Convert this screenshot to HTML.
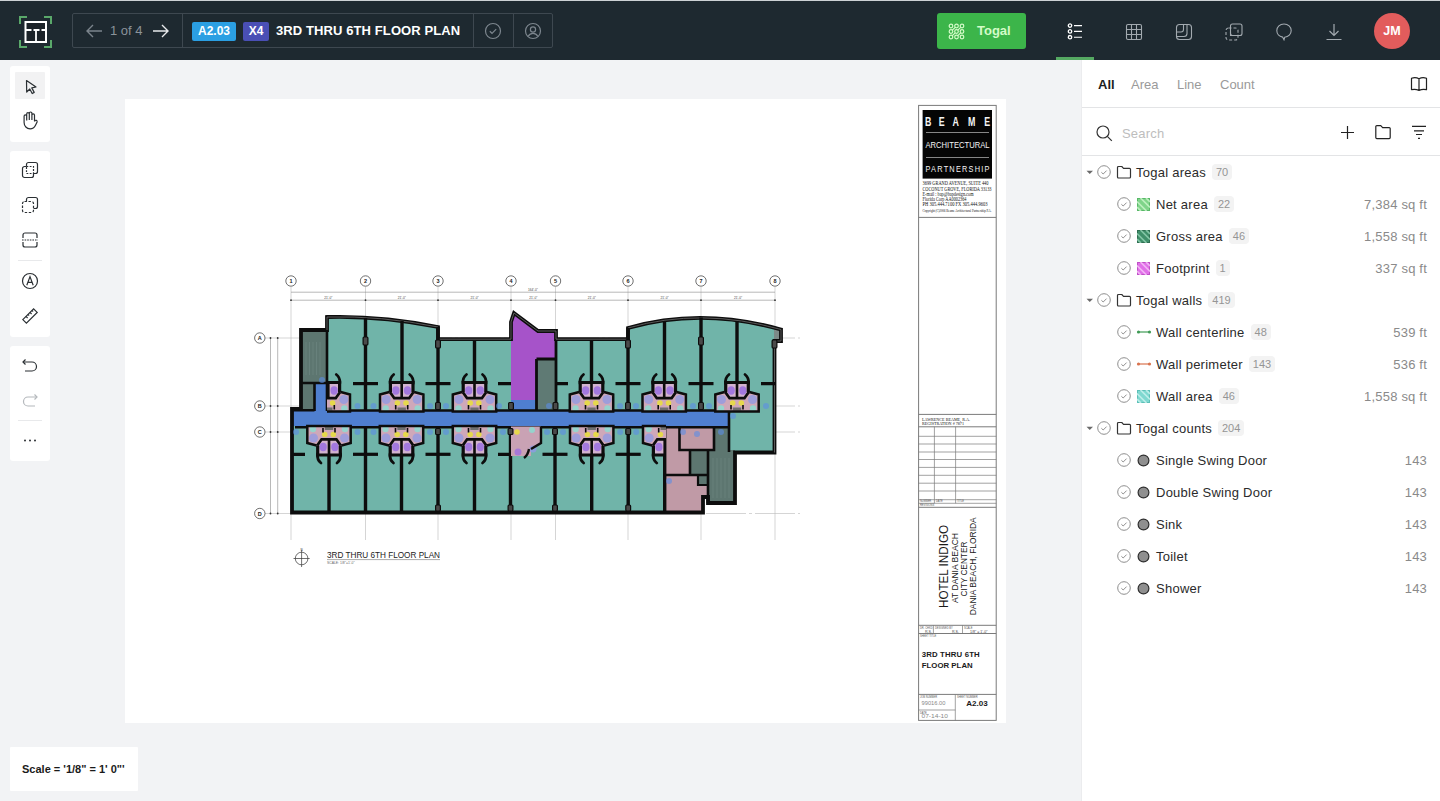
<!DOCTYPE html>
<html><head><meta charset="utf-8">
<style>
*{box-sizing:border-box;margin:0;padding:0}
html,body{width:1440px;height:801px;overflow:hidden;background:#f2f3f5;font-family:"Liberation Sans",sans-serif;position:relative}
.abs{position:absolute}
#topline{left:0;top:0;width:1440px;height:1px;background:#cdd1d4}
#hdr{left:0;top:1px;width:1440px;height:59px;background:#1e2930}
#crumb{left:72px;top:13px;width:481px;height:35px;border:1px solid #3e4850;border-radius:2px}
.vdiv{position:absolute;top:0;width:1px;height:33px;background:#3e4850}
.badge{position:absolute;top:8px;height:19px;border-radius:2px;color:#fff;font-weight:bold;font-size:12px;line-height:19px;text-align:center}
#ttl{position:absolute;left:203px;top:0;line-height:33px;color:#fff;font-weight:bold;font-size:13px;letter-spacing:0.1px}
#togal{left:937px;top:13px;width:89px;height:36px;background:#3cb54a;border-radius:3px}
#togal span{position:absolute;left:40px;top:0;line-height:36px;color:#d4fbc8;font-weight:bold;font-size:13px}
#uline{left:1056px;top:57px;width:38px;height:3px;background:#55a962}
#avatar{left:1374px;top:13px;width:36px;height:36px;border-radius:50%;background:#e25c5c;color:#fff;font-size:12.5px;font-weight:bold;text-align:center;line-height:36px}
.panel{position:absolute;left:10px;width:40px;background:#fff;border-radius:3px}
#paper{left:125px;top:99px;width:881px;height:624px;background:#fff}
#side{left:1081px;top:60px;width:359px;height:741px;background:#fff;border-left:1px solid #ebecee}
#scale{left:10px;top:747px;width:128px;height:44px;background:#fff;border-radius:1px;font-size:11px;font-weight:bold;color:#1a1a1a;line-height:44px;padding-left:12px}
.tab{position:absolute;top:0;line-height:49px;font-size:13px;color:#9a9a9a}
.sep{position:absolute;left:0;width:358px;height:1px;background:#e3e4e6}
.row{position:absolute;left:0;width:358px;height:32px}
.row .t{position:absolute;top:1px;line-height:32px;font-size:13px;color:#2b2b2b;letter-spacing:0.25px}
.row .c{display:inline-block;margin-left:6px;padding:0 4px;height:16px;line-height:16px;font-size:11px;color:#959595;background:#f3f3f3;border-radius:4px;vertical-align:1px;letter-spacing:0}
.row .v{position:absolute;right:13px;top:1px;line-height:32px;font-size:13px;color:#8a8a8a;letter-spacing:0.2px}
</style></head><body>
<div id="topline" class="abs"></div>
<div id="hdr" class="abs">
<svg class="abs" style="left:17px;top:13px" width="37" height="36" viewBox="0 0 37 36">
<g fill="none" stroke="#5aa86a" stroke-width="2">
<path d="M3 10V3h7"/><path d="M27 3h7v7"/><path d="M3 26v7h7"/><path d="M27 33h7v-7"/>
</g>
<rect x="8.5" y="8" width="20.5" height="20" fill="#1b2228" stroke="#fff" stroke-width="2"/>
<path d="M9 16h5.5M16.5 16h6M24.5 16h4M19 16V28" stroke="#fff" stroke-width="1.8" fill="none"/>
</svg>
<div id="crumb" class="abs" style="top:12px">
 <svg class="abs" style="left:12px;top:9px" width="18" height="16" viewBox="0 0 18 16"><path d="M17 8H2M8 2L2 8l6 6" fill="none" stroke="#7b848c" stroke-width="1.4"/></svg>
 <div class="abs" style="left:37px;top:0;line-height:33px;font-size:13px;color:#8b939a">1 of 4</div>
 <svg class="abs" style="left:79px;top:9px" width="18" height="16" viewBox="0 0 18 16"><path d="M1 8h15M10 2l6 6-6 6" fill="none" stroke="#e8eaec" stroke-width="1.4"/></svg>
 <div class="vdiv" style="left:109px"></div>
 <div class="badge" style="left:119px;width:44px;background:#2b9fe3">A2.03</div>
 <div class="badge" style="left:170px;width:26px;background:#4a4fb5">X4</div>
 <div id="ttl">3RD THRU 6TH FLOOR PLAN</div>
 <div class="vdiv" style="left:400px"></div>
 <svg class="abs" style="left:411px;top:8px" width="18" height="18" viewBox="0 0 18 18"><circle cx="9" cy="9" r="7.5" fill="none" stroke="#7d868e" stroke-width="1.2"/><path d="M5.8 9.3l2.2 2 4.2-4.2" fill="none" stroke="#7d868e" stroke-width="1.2"/></svg>
 <div class="vdiv" style="left:440px"></div>
 <svg class="abs" style="left:451px;top:8px" width="18" height="18" viewBox="0 0 18 18"><circle cx="9" cy="9" r="7.5" fill="none" stroke="#7d868e" stroke-width="1.2"/><circle cx="9" cy="7.5" r="2.6" fill="none" stroke="#7d868e" stroke-width="1.2"/><path d="M4.2 14.2c1.2-2 2.8-2.8 4.8-2.8s3.6.8 4.8 2.8" fill="none" stroke="#7d868e" stroke-width="1.2"/></svg>
</div>
<div id="togal" class="abs" style="top:12px">
 <svg class="abs" style="left:11px;top:10px" width="17" height="17" viewBox="0 0 17 17"><g fill="none" stroke="#d4fbc8" stroke-width="1.2">
 <circle cx="3" cy="3" r="1.8"/><circle cx="8.5" cy="3" r="1.8"/><circle cx="14" cy="3" r="1.8"/>
 <circle cx="3" cy="8.5" r="1.8"/><circle cx="8.5" cy="8.5" r="1.8"/><circle cx="14" cy="8.5" r="1.8"/>
 <circle cx="3" cy="14" r="1.8"/><circle cx="8.5" cy="14" r="1.8"/><circle cx="14" cy="14" r="1.8"/>
 <path d="M4.3 7.2l2.9-2.9M4.3 12.7l2.9-2.9M9.8 7.2l2.9-2.9M9.8 12.7l2.9-2.9"/></g></svg>
 <span>Togal</span>
</div>
<svg class="abs" style="left:1067px;top:21px" width="18" height="18" viewBox="0 0 18 18"><g fill="none" stroke="#fff" stroke-width="1.3"><circle cx="3" cy="3.6" r="1.7"/><circle cx="3" cy="9.4" r="1.7"/><circle cx="3" cy="15.2" r="1.7"/><path d="M7 3.6h8M7 9.4h8M7 15.2h8" stroke-width="1.1"/></g></svg>
<div id="uline" class="abs" style="top:56px"></div>
<svg class="abs" style="left:1125px;top:22px" width="18" height="18" viewBox="0 0 18 18"><g fill="none" stroke="#a3aab0" stroke-width="1.1"><rect x="1.5" y="1.5" width="15" height="15" rx="1.5"/><path d="M6.5 1.5v15M11.5 1.5v15M1.5 6.5h15M1.5 11.5h15"/></g></svg>
<svg class="abs" style="left:1175px;top:22px" width="18" height="18" viewBox="0 0 18 18"><g fill="none" stroke="#a3aab0" stroke-width="1.1"><rect x="1.5" y="1.5" width="15" height="15" rx="3"/><path d="M12 1.5v9a3 3 0 0 1-3 3H1.5"/><path d="M8.5 1.5v5a2.5 2.5 0 0 1-2.5 2.5H1.5"/></g></svg>
<svg class="abs" style="left:1225px;top:22px" width="18" height="18" viewBox="0 0 18 18"><g fill="none" stroke="#a3aab0" stroke-width="1.1"><rect x="5.5" y="1" width="11.5" height="11.5" rx="2"/><rect x="1" y="5" width="12" height="12" rx="2.5" stroke-dasharray="3 2"/><path d="M5.5 8.5V12.5h4"/></g></svg>
<svg class="abs" style="left:1275px;top:22px" width="18" height="18" viewBox="0 0 18 18"><path d="M9 1c4.1 0 7.2 2.9 7.2 6.6 0 3.5-2.8 6.3-6.5 6.6L9 16.8l-1.4-2.7C4.2 13.6 1.8 10.9 1.8 7.6 1.8 3.9 4.9 1 9 1z" fill="none" stroke="#a3aab0" stroke-width="1.1"/></svg>
<svg class="abs" style="left:1325px;top:22px" width="18" height="18" viewBox="0 0 18 18"><g fill="none" stroke="#a3aab0" stroke-width="1.2"><path d="M9 1v11.5M4.5 8l4.5 4.5L13.5 8M1.5 16.5h15"/></g></svg>
<div id="avatar" class="abs" style="top:12px">JM</div>
</div>
<div id="paper" class="abs"></div>
<svg class="abs" style="left:0;top:0" width="1440" height="801" viewBox="0 0 1440 801">
<!--PLAN-->
<g stroke="#b9b9b9" stroke-width="0.6" fill="none">
<path d="M291 287V540"/>
<path d="M365.5 287V540"/>
<path d="M438 287V540"/>
<path d="M511 287V540"/>
<path d="M555.5 287V540"/>
<path d="M628 287V540"/>
<path d="M701 287V540"/>
<path d="M775 287V540"/>
<path d="M265 338H800" stroke-dasharray="40 3 3 3"/>
<path d="M265 406H800" stroke-dasharray="40 3 3 3"/>
<path d="M265 432H800" stroke-dasharray="40 3 3 3"/>
<path d="M265 513.5H800" stroke-dasharray="40 3 3 3"/>
</g>
<g stroke="#8a8a8a" stroke-width="0.6" fill="none">
<path d="M291 292.2H775M291 300.2H775M270.5 338V514M277.7 338V514"/>
</g>
<g fill="#333">
<circle cx="291" cy="300.2" r="0.9"/>
<circle cx="365.5" cy="300.2" r="0.9"/>
<circle cx="438" cy="300.2" r="0.9"/>
<circle cx="511" cy="300.2" r="0.9"/>
<circle cx="555.5" cy="300.2" r="0.9"/>
<circle cx="628" cy="300.2" r="0.9"/>
<circle cx="701" cy="300.2" r="0.9"/>
<circle cx="775" cy="300.2" r="0.9"/>
<circle cx="277.7" cy="338" r="0.9"/><circle cx="270.5" cy="338" r="0.9"/>
<circle cx="277.7" cy="406" r="0.9"/><circle cx="270.5" cy="406" r="0.9"/>
<circle cx="277.7" cy="432" r="0.9"/><circle cx="270.5" cy="432" r="0.9"/>
<circle cx="277.7" cy="513.5" r="0.9"/><circle cx="270.5" cy="513.5" r="0.9"/>
</g>
<g font-family="Liberation Sans" font-size="5.5" font-weight="bold" text-anchor="middle" fill="#222">
<circle cx="291" cy="281" r="5.2" fill="#fff" stroke="#333" stroke-width="0.7"/><text x="291" y="283">1</text>
<circle cx="365.5" cy="281" r="5.2" fill="#fff" stroke="#333" stroke-width="0.7"/><text x="365.5" y="283">2</text>
<circle cx="438" cy="281" r="5.2" fill="#fff" stroke="#333" stroke-width="0.7"/><text x="438" y="283">3</text>
<circle cx="511" cy="281" r="5.2" fill="#fff" stroke="#333" stroke-width="0.7"/><text x="511" y="283">4</text>
<circle cx="555.5" cy="281" r="5.2" fill="#fff" stroke="#333" stroke-width="0.7"/><text x="555.5" y="283">5</text>
<circle cx="628" cy="281" r="5.2" fill="#fff" stroke="#333" stroke-width="0.7"/><text x="628" y="283">6</text>
<circle cx="701" cy="281" r="5.2" fill="#fff" stroke="#333" stroke-width="0.7"/><text x="701" y="283">7</text>
<circle cx="775" cy="281" r="5.2" fill="#fff" stroke="#333" stroke-width="0.7"/><text x="775" y="283">8</text>
<circle cx="259.8" cy="338" r="5.2" fill="#fff" stroke="#333" stroke-width="0.7"/><text x="259.8" y="340">A</text>
<circle cx="259.8" cy="406" r="5.2" fill="#fff" stroke="#333" stroke-width="0.7"/><text x="259.8" y="408">B</text>
<circle cx="259.8" cy="432" r="5.2" fill="#fff" stroke="#333" stroke-width="0.7"/><text x="259.8" y="434">C</text>
<circle cx="259.8" cy="513.5" r="5.2" fill="#fff" stroke="#333" stroke-width="0.7"/><text x="259.8" y="515.5">D</text>
</g>
<g font-family="Liberation Sans" font-size="3.2" fill="#444" text-anchor="middle">
<text x="328.25" y="298.8">21&#39;-0&quot;</text>
<text x="401.75" y="298.8">21&#39;-0&quot;</text>
<text x="474.5" y="298.8">21&#39;-0&quot;</text>
<text x="533.25" y="298.8">21&#39;-0&quot;</text>
<text x="591.75" y="298.8">21&#39;-0&quot;</text>
<text x="664.5" y="298.8">21&#39;-0&quot;</text>
<text x="738.0" y="298.8">21&#39;-0&quot;</text>
<text x="533" y="290.8">164&#39;-0&quot;</text>
</g>
<path d="M327 317Q381 315.5 438 327V339H511V412H327Z" fill="#70b4a9"/>
<path d="M555.5 339H628V328Q701 307 775 328V453H729V412H555.5Z" fill="#70b4a9"/>
<rect x="511" y="340" width="45" height="72" fill="#70b4a9"/>
<rect x="291" y="426" width="374" height="87" fill="#70b4a9"/>
<path d="M301 330H327V383H314V409H301Z" fill="#5d7670"/>
<path d="M293 409.5H314V383H327V411H729V426H293Z" fill="#4f7fd0"/>
<rect x="511" y="398" width="26" height="14" fill="#4f7fd0"/>
<path d="M511 322L514 313L538 331H556V359H536.5V400H511Z" fill="#a653c9"/>
<rect x="536.5" y="359" width="19" height="50" fill="#5f7a74"/>
<path d="M665 426H729V450H708V497H703V512H665Z" fill="#c09aa6"/>
<path d="M714 426H729V450H735V503H708V485H698V475H690V450H714Z" fill="#5d7670"/>
<g stroke="#7b948e" stroke-width="0.6" opacity="0.7">
<path d="M306 342V375"/>
<path d="M309.5 342V375"/>
<path d="M313 342V375"/>
<path d="M316.5 342V375"/>
<path d="M320 342V375"/>
<path d="M713 458V498"/>
<path d="M717 458V498"/>
<path d="M721 458V498"/>
<path d="M725 458V498"/>
<path d="M729 458V498"/>
</g>
<rect x="774" y="329" width="7" height="12" fill="#7d8a88"/>
<g fill="none" stroke="#0d0d0d" stroke-linejoin="miter">
<path stroke-width="3.8" d="M292 512.5V409H301V330H327V317Q381 315.5 438 327V339.2H511V322L514 313L538 331H556V339.2H628V328Q701 307 781 329.5V341H774.5V452.5H735V503H708V497H703V512.5Z"/>
<path stroke-width="0.8" stroke="#6d6d6d" d="M327 330V317Q381 315.5 438 327V339.2H511V322L514 313L538 331H556V339.2H628V328Q701 307 781 329.5V341H774.5V452.5"/>
<path stroke-width="2.6" d="M327 410.5H729M295 427.2H729M314.5 383V411M327 330V411M301 383H327M729 410V452M292 410.2H314.5"/>
<path stroke-width="3.4" d="M365.5 318V410"/>
<path stroke-width="3.4" d="M402 321V410"/>
<path stroke-width="3.4" d="M438 327V410"/>
<path stroke-width="3.4" d="M474.5 340V410"/>
<path stroke-width="3.4" d="M591.5 340V410"/>
<path stroke-width="3.4" d="M628 328V410"/>
<path stroke-width="3.4" d="M664.5 321V410"/>
<path stroke-width="3.4" d="M701 317.5V410"/>
<path stroke-width="3.4" d="M737 321V410"/>
<path stroke-width="2.8" d="M536.5 359V410M536.5 359H556M556 340V410"/>
<path stroke-width="3.2" d="M353.0 383.6H378.0"/>
<path stroke-width="3.2" d="M425.5 383.6H450.5"/>
<path stroke-width="3.2" d="M615.5 383.6H640.5"/>
<path stroke-width="3.2" d="M688.5 383.6H713.5"/>
<path stroke-width="3.2" d="M498 383.6H511M556 383.6H568M761 383.6H775"/>
<path stroke-width="3.4" d="M329 427V512"/>
<path stroke-width="3.4" d="M365.5 427V512"/>
<path stroke-width="3.4" d="M401.5 427V512"/>
<path stroke-width="3.4" d="M438 427V512"/>
<path stroke-width="3.4" d="M474.5 427V512"/>
<path stroke-width="3.4" d="M510.5 427V512"/>
<path stroke-width="3.4" d="M555 427V512"/>
<path stroke-width="3.4" d="M591.7 427V512"/>
<path stroke-width="3.4" d="M628.2 427V512"/>
<path stroke-width="3.4" d="M664.7 427V512"/>
<path stroke-width="3.2" d="M353.0 454.3H378.0"/>
<path stroke-width="3.2" d="M425.5 454.3H450.5"/>
<path stroke-width="3.2" d="M542.5 454.3H567.5"/>
<path stroke-width="3.2" d="M615.7 454.3H640.7"/>
<path stroke-width="3.2" d="M293 454.3H305M498 454.3H510.5"/>
<path stroke-width="2.6" d="M679.5 427V450H714V427M690 450V475H665M708 450V503M690 475H708"/>
<path stroke-width="2.2" d="M698 475V485H708"/>
</g>
<defs>
<clipPath id="cR"><rect x="-1.3" y="-45" width="30" height="50"/></clipPath>
<clipPath id="cL"><rect x="-28.7" y="-45" width="30" height="50"/></clipPath>
<g id="pod">
<path d="M-21.7 0V-17L-12.4 -19.5V-30H12.4V-19.5L21.7 -17V0Z" fill="#cfa8b9"/>
<circle cx="-15.5" cy="-12" r="4.5" fill="#8e9ae6" opacity="0.75"/><circle cx="15.5" cy="-12" r="4.5" fill="#8e9ae6" opacity="0.75"/>
<circle cx="-16" cy="-3" r="3.2" fill="#90d8cf" opacity="0.9"/><circle cx="16" cy="-3" r="3.2" fill="#90d8cf" opacity="0.9"/>
<path d="M-10.8 -28H-1.3V-14.5H-7.2L-10.8 -19.5Z M10.8 -28H1.3V-14.5H7.2L10.8 -19.5Z" fill="#d2b3cf"/>
<ellipse cx="-5.8" cy="-21" rx="3.6" ry="4.2" fill="#9a6de0" opacity="0.85"/><ellipse cx="5.8" cy="-21" rx="3.6" ry="4.2" fill="#9a6de0" opacity="0.85"/>
<circle cx="-4.3" cy="-8.5" r="2.8" fill="#e6d84c"/><circle cx="4.3" cy="-8.5" r="2.8" fill="#e6d84c"/>
<rect x="-4.2" y="-4" width="8.4" height="3" fill="#6f6f6f"/>
<g fill="none" stroke="#0d0d0d" stroke-width="2.5">
<path d="M-12.4 -19.5L-21.7 -17V0H21.7V-17L12.4 -19.5"/>
<path d="M-11.3 -19.5V-29H11.3V-19.5" stroke-width="3.2"/>
<path d="M-11.8 -19.5L-7.4 -13.3H7.4L11.8 -19.5" stroke-width="2.8"/><path d="M0 -30V-13" stroke-width="2.6"/>
<path d="M-11.5 -28Q-12 -34 -8 -37M11.5 -28Q12 -34 8 -37" stroke-width="2.8" stroke-linecap="round"/>
<path d="M-6 -6.5V-2M6 -6.5V-2" stroke-width="1.6"/>
</g></g>
</defs>
<use href="#pod" transform="translate(401.7 411.5)"/>
<use href="#pod" transform="translate(474.5 411.5)"/>
<use href="#pod" transform="translate(591.5 411.5)"/>
<use href="#pod" transform="translate(664.2 411.5)"/>
<use href="#pod" transform="translate(737 411.5)"/>
<g clip-path="url(#cR)" transform="translate(328.3 411.5)"><use href="#pod"/></g>
<use href="#pod" transform="translate(329 426) scale(1 -1)"/>
<use href="#pod" transform="translate(401.5 426) scale(1 -1)"/>
<use href="#pod" transform="translate(474.5 426) scale(1 -1)"/>
<use href="#pod" transform="translate(591.7 426) scale(1 -1)"/>
<g transform="translate(664.7 426) scale(1 -1)"><g clip-path="url(#cL)"><use href="#pod"/></g></g>
<path d="M511 426.5H541V443L531 449V456H511Z" fill="#c9a2b4"/>
<circle cx="517" cy="432" r="2.8" fill="#e6d84c"/><circle cx="532" cy="430" r="3" fill="#90d8cf" opacity="0.9"/><circle cx="518" cy="452" r="3.5" fill="#a678d8"/><circle cx="533" cy="449" r="3.5" fill="#8e9ae6" opacity="0.8"/>
<path d="M541 426.5V443L531 449M529 449Q528 455 524 458" fill="none" stroke="#0d0d0d" stroke-width="2.4"/>
<g fill="#5b8de6" opacity="0.6">
<circle cx="357.5" cy="406" r="3"/><circle cx="373.5" cy="406" r="3"/>
<circle cx="430" cy="406" r="3"/><circle cx="446" cy="406" r="3"/>
<circle cx="620" cy="406" r="3"/><circle cx="636" cy="406" r="3"/>
<circle cx="693" cy="406" r="3"/><circle cx="709" cy="406" r="3"/>
<circle cx="357.5" cy="432" r="3"/><circle cx="373.5" cy="432" r="3"/>
<circle cx="430" cy="432" r="3"/><circle cx="446" cy="432" r="3"/>
<circle cx="547" cy="432" r="3"/><circle cx="563" cy="432" r="3"/>
<circle cx="620.2" cy="432" r="3"/><circle cx="636.2" cy="432" r="3"/>
<circle cx="322" cy="380" r="3"/><circle cx="549" cy="406" r="3"/><circle cx="296" cy="432" r="3"/><circle cx="503" cy="432" r="3"/><circle cx="683" cy="432" r="3"/><circle cx="697" cy="434" r="3"/><circle cx="669" cy="481" r="3"/><circle cx="733" cy="416" r="3"/><circle cx="499" cy="406" r="3"/><circle cx="766" cy="406" r="3"/><circle cx="721" cy="432" r="3"/>
</g>
<g fill="#4a4a4a" stroke="#0d0d0d" stroke-width="1.2">
<rect x="363.1" y="337" width="4.8" height="8" rx="1"/>
<rect x="698.6" y="337" width="4.8" height="8" rx="1"/>
<rect x="435.6" y="340" width="4.8" height="8" rx="1"/>
<rect x="625.6" y="340" width="4.8" height="8" rx="1"/>
<rect x="772.1" y="340" width="4.8" height="8" rx="1"/>
<rect x="435.6" y="402.5" width="4.8" height="7" rx="1"/>
<rect x="508.6" y="402.5" width="4.8" height="7" rx="1"/>
<rect x="553.1" y="402.5" width="4.8" height="7" rx="1"/>
<rect x="625.6" y="402.5" width="4.8" height="7" rx="1"/>
<rect x="698.6" y="402.5" width="4.8" height="7" rx="1"/>
<rect x="435.6" y="428.5" width="4.8" height="6" rx="1"/><rect x="435.6" y="505" width="4.8" height="6" rx="1"/>
<rect x="508.1" y="428.5" width="4.8" height="6" rx="1"/><rect x="508.1" y="505" width="4.8" height="6" rx="1"/>
<rect x="552.6" y="428.5" width="4.8" height="6" rx="1"/><rect x="552.6" y="505" width="4.8" height="6" rx="1"/>
<rect x="625.8000000000001" y="428.5" width="4.8" height="6" rx="1"/><rect x="625.8000000000001" y="505" width="4.8" height="6" rx="1"/>
</g>
<g fill="none" stroke="#333" stroke-width="0.7"><circle cx="301.6" cy="558.5" r="6.3"/><path d="M301.6 550V567M293.5 558.5H309.7"/></g>
<text x="301.6" y="551" font-family="Liberation Sans" font-size="3" text-anchor="middle" fill="#333">N</text>
<text x="327" y="558" font-family="Liberation Sans" font-size="8.2" fill="#222" textLength="113" lengthAdjust="spacingAndGlyphs">3RD THRU 6TH FLOOR PLAN</text>
<path d="M327 559.6H440" stroke="#555" stroke-width="0.5"/>
<text x="327" y="563.8" font-family="Liberation Sans" font-size="3.4" fill="#666">SCALE: 1/8"=1'-0"</text>
<g fill="none" stroke="#7a7a7a" stroke-width="1">
<rect x="918.6" y="105.4" width="77.6" height="615"/>
<path d="M918.6 217.4H996.2"/>
<path d="M918.6 414.4H996.2"/>
<path d="M918.6 426.8H996.2"/>
<path d="M918.6 507.3H996.2"/>
<path d="M918.6 625.3H996.2"/>
<path d="M918.6 633.5H996.2"/>
<path d="M918.6 694.4H996.2"/>
<path d="M918.6 436.3H996.2" stroke-width="0.7"/>
<path d="M918.6 444H996.2" stroke-width="0.7"/>
<path d="M918.6 452H996.2" stroke-width="0.7"/>
<path d="M918.6 459.5H996.2" stroke-width="0.7"/>
<path d="M918.6 467.4H996.2" stroke-width="0.7"/>
<path d="M918.6 475.3H996.2" stroke-width="0.7"/>
<path d="M918.6 483.2H996.2" stroke-width="0.7"/>
<path d="M918.6 491H996.2" stroke-width="0.7"/>
<path d="M918.6 499.7H996.2" stroke-width="0.7"/>
<path d="M918.6 503.3H996.2" stroke-width="0.7"/>
<path d="M934.4 426.8V503.3M955.6 426.8V503.3" stroke-width="0.7"/>
<path d="M933.4 625.3V633.5M962.5 625.3V633.5" stroke-width="0.7"/>
<path d="M955.3 694.4V720.4M918.6 710H955.3" stroke-width="0.7"/>
</g>
<rect x="922.6" y="110" width="69.4" height="68.6" fill="#050505"/>
<path d="M926 132.5H989M926 157.5H989" stroke="#ddd" stroke-width="0.6"/>
<g font-family="Liberation Sans" font-weight="bold" fill="#f4f4f4">
<text font-size="13.4" text-anchor="middle" transform="translate(928.3 125.6) scale(0.66 1)">B</text>
<text font-size="13.4" text-anchor="middle" transform="translate(941.8 125.6) scale(0.66 1)">E</text>
<text font-size="13.4" text-anchor="middle" transform="translate(955.8 125.6) scale(0.66 1)">A</text>
<text font-size="13.4" text-anchor="middle" transform="translate(971.8 125.6) scale(0.66 1)">M</text>
<text font-size="13.4" text-anchor="middle" transform="translate(987.3 125.6) scale(0.66 1)">E</text>
<text font-size="9.8" font-weight="normal" transform="translate(925.5 148.2) scale(0.75 1)" textLength="85.3" lengthAdjust="spacingAndGlyphs">ARCHITECTURAL</text>
<text font-size="9.8" font-weight="normal" transform="translate(925.5 172.2) scale(0.75 1)" textLength="85.3" lengthAdjust="spacing">PARTNERSHIP</text>
</g>
<g font-family="Liberation Serif" font-size="5.6" fill="#111">
<text x="922.5" y="185.4" textLength="66" lengthAdjust="spacingAndGlyphs">3699 GRAND AVENUE, SUITE 440</text>
<text x="922.5" y="190.6" textLength="69" lengthAdjust="spacingAndGlyphs">COCONUT GROVE, FLORIDA 33133</text>
<text x="922.5" y="196" textLength="51" lengthAdjust="spacingAndGlyphs">E-mail : bap@bapdesign.com</text>
<text x="922.5" y="201.2" textLength="44" lengthAdjust="spacingAndGlyphs">Florida Corp AA0002364</text>
<text x="922.5" y="206.4" textLength="65" lengthAdjust="spacingAndGlyphs">PH 305.444.7100   FX 305.444.9603</text>
<text x="922.5" y="212.2" font-size="3" textLength="69" lengthAdjust="spacingAndGlyphs">Copyright (C)2006 Beame Architectural Partnership P.A.</text>
<text x="922" y="420.6" font-size="4.6" textLength="48" lengthAdjust="spacingAndGlyphs">LAWRENCE BEAME, R.A.</text>
<text x="922" y="424.6" font-size="4.6" textLength="42" lengthAdjust="spacingAndGlyphs">REGISTRATION # 7871</text>
</g>
<g font-family="Liberation Sans" font-size="2.6" fill="#555">
<text x="920" y="502">NUMBER</text><text x="936" y="502">DATE</text><text x="957" y="502">TITLE</text><text x="920" y="506.3">REVISIONS</text>
<text x="920" y="628.5">DR. CHKD</text><text x="935" y="628.5">DESIGNED BY</text><text x="964" y="628.5">SCALE</text>
<text x="920" y="637">SHEET TITLE</text><text x="920" y="698">JOB NUMBER</text><text x="957" y="698">SHEET NUMBER</text><text x="920" y="713.5">DATE</text>
</g>
<g font-family="Liberation Sans" font-size="3.6" fill="#444">
<text x="925" y="632.5">R.S.</text><text x="952" y="632.5">R.S.</text><text x="970" y="632.5">1/8" = 1'-0"</text>
</g>
<g font-family="Liberation Sans" fill="#1a1a1a" transform="translate(0 0)">
<text transform="translate(948.2 608) rotate(-90)" font-size="13.2" textLength="83" lengthAdjust="spacingAndGlyphs">HOTEL INDIGO</text>
<text transform="translate(958 603) rotate(-90)" font-size="9.2" textLength="70" lengthAdjust="spacingAndGlyphs">AT DANIA BEACH</text>
<text transform="translate(966.8 596.6) rotate(-90)" font-size="9.2" textLength="55" lengthAdjust="spacingAndGlyphs">CITY CENTER</text>
<text transform="translate(975.8 615.3) rotate(-90)" font-size="9.2" textLength="98" lengthAdjust="spacingAndGlyphs">DANIA BEACH, FLORIDA</text>
</g>
<g font-family="Liberation Sans" font-weight="bold" fill="#1a1a1a">
<text x="921.7" y="657" font-size="7.8" textLength="58" lengthAdjust="spacing">3RD THRU 6TH</text>
<text x="921.7" y="667.6" font-size="7.8" textLength="51" lengthAdjust="spacing">FLOOR PLAN</text>
<text x="966.3" y="706.2" font-size="8" textLength="21.5" lengthAdjust="spacingAndGlyphs">A2.03</text>
</g>
<g font-family="Liberation Sans" fill="#888">
<text x="921.5" y="705.3" font-size="5.5" textLength="24" lengthAdjust="spacingAndGlyphs">99016.00</text>
<text x="921.5" y="718" font-size="5.5" textLength="26.5" lengthAdjust="spacingAndGlyphs">07-14-10</text>
</g>
<!--/PLAN-->
</svg>
<div class="panel" style="top:66px;height:76px">
 <div class="abs" style="left:5px;top:6px;width:30px;height:27px;background:#f2f2f3;border-radius:1px"></div>
 <svg class="abs" style="left:13.5px;top:12.5px" width="16" height="18" viewBox="0 0 16 18"><path d="M2.5 1.5l9.5 6.5-4.2.9 2.4 4.5-2 1.1-2.4-4.5-3.1 3z" fill="none" stroke="#2a2f33" stroke-width="1.2" stroke-linejoin="round"/></svg>
 <svg class="abs" style="left:11px;top:45px" width="18" height="19" viewBox="0 0 18 19"><path transform="translate(18 0) scale(-1 1)" d="M4.5 10V4.2a1.3 1.3 0 0 1 2.6 0V9M7.1 9V2.3a1.3 1.3 0 0 1 2.6 0V9M9.7 9V3a1.3 1.3 0 0 1 2.6 0V9.5M12.3 9.5V5.2a1.3 1.3 0 0 1 2.6 0v6.3c0 3.7-2.6 6.3-6 6.3-2.6 0-4.2-1.2-5.4-3.6L1.9 10.9a1.3 1.3 0 0 1 2.3-1.1L4.5 10.5" fill="none" stroke="#2a2f33" stroke-width="1.2" stroke-linejoin="round"/></svg>
</div>
<div class="panel" style="top:151px;height:186px">
 <svg class="abs" style="left:11px;top:10px" width="18" height="18" viewBox="0 0 18 18"><g fill="none" stroke="#2a2f33" stroke-width="1.2"><path d="M5.5 5.5V3.5a2 2 0 0 1 2-2h7a2 2 0 0 1 2 2v7a2 2 0 0 1-2 2h-2"/><path d="M12.5 12.5v2a2 2 0 0 1-2 2h-7a2 2 0 0 1-2-2v-7a2 2 0 0 1 2-2h2"/><rect x="5.5" y="5.5" width="7" height="7" stroke-dasharray="1.8 1.4"/></g></svg>
 <svg class="abs" style="left:11px;top:45px" width="18" height="18" viewBox="0 0 18 18"><g fill="none" stroke="#2a2f33" stroke-width="1.2"><path d="M5.5 5.5V3.5a2 2 0 0 1 2-2h7a2 2 0 0 1 2 2v7a2 2 0 0 1-2 2h-2"/><rect x="1.5" y="5.5" width="11" height="11" rx="2" stroke-dasharray="2.4 1.6"/></g></svg>
 <svg class="abs" style="left:11px;top:80px" width="18" height="18" viewBox="0 0 18 18"><g fill="none" stroke="#2a2f33" stroke-width="1.2"><path d="M2 7V4a2 2 0 0 1 2-2h10a2 2 0 0 1 2 2v3M2 11v3a2 2 0 0 0 2 2h10a2 2 0 0 0 2-2v-3"/><path d="M1 9h16" stroke-dasharray="1.6 1"/></g></svg>
 <div class="abs" style="left:8px;top:109px;width:24px;height:1px;background:#e8e9eb"></div>
 <svg class="abs" style="left:11px;top:121px" width="18" height="18" viewBox="0 0 18 18"><g fill="none" stroke="#2a2f33" stroke-width="1.2"><circle cx="9" cy="9" r="7.5"/><path d="M5.8 13.2L9 4.6l3.2 8.6M7 10.3h4"/></g></svg>
 <svg class="abs" style="left:11px;top:156px" width="18" height="18" viewBox="0 0 18 18"><g fill="none" stroke="#2a2f33" stroke-width="1.2"><path d="M1.8 12.6L12.6 1.8l3.6 3.6L5.4 16.2z"/><path d="M5 9.4l1.6 1.6M7 7.4l1.1 1.1M9 5.4l1.6 1.6M11 3.4l1.1 1.1"/></g></svg>
</div>
<div class="panel" style="top:346px;height:115px">
 <svg class="abs" style="left:11px;top:11px" width="18" height="18" viewBox="0 0 18 18"><g fill="none" stroke="#2a2f33" stroke-width="1.2"><path d="M4.5 2.5L2 5l2.5 2.5"/><path d="M2 5h9a4.5 4.5 0 0 1 0 9H4"/></g></svg>
 <svg class="abs" style="left:11px;top:46px" width="18" height="18" viewBox="0 0 18 18"><g fill="none" stroke="#b4b8bc" stroke-width="1.2"><path d="M13.5 2.5L16 5l-2.5 2.5"/><path d="M16 5H7a4.5 4.5 0 0 0 0 9h7"/></g></svg>
 <div class="abs" style="left:8px;top:74px;width:24px;height:1px;background:#e8e9eb"></div>
 <svg class="abs" style="left:11px;top:85px" width="18" height="18" viewBox="0 0 18 18"><g fill="#2a2f33"><circle cx="4" cy="9.5" r="1"/><circle cx="9" cy="9.5" r="1"/><circle cx="14" cy="9.5" r="1"/></g></svg>
</div>

<div id="side" class="abs">
 <div class="tab" style="left:16px;color:#1d1d1d;font-weight:bold">All</div>
 <div class="tab" style="left:49px">Area</div>
 <div class="tab" style="left:95px">Line</div>
 <div class="tab" style="left:138px">Count</div>
 <svg class="abs" style="left:328px;top:16px" width="18" height="16" viewBox="0 0 18 16"><path d="M1.5 2.2c2.5-.9 5-.9 7.5.5 2.5-1.4 5-1.4 7.5-.5v11.5c-2.5-.7-5-.5-7.5.7-2.5-1.2-5-1.4-7.5-.7z M9 2.7v11.7" fill="none" stroke="#222" stroke-width="1.2" stroke-linejoin="round"/></svg>
 <div class="sep" style="top:47px"></div>
 <svg class="abs" style="left:14px;top:65px" width="17" height="17" viewBox="0 0 17 17"><circle cx="7" cy="7" r="6" fill="none" stroke="#333" stroke-width="1.2"/><path d="M11.3 11.3l4.5 4.5" stroke="#333" stroke-width="1.2"/></svg>
 <div class="abs" style="left:40px;top:49.5px;line-height:48px;font-size:13px;color:#bdbdbd;letter-spacing:0.2px">Search</div>
 <svg class="abs" style="left:258px;top:65px" width="15" height="15" viewBox="0 0 15 15"><path d="M7.5 1v13M1 7.5h13" stroke="#222" stroke-width="1.2"/></svg>
 <svg class="abs" style="left:292px;top:64px" width="18" height="16" viewBox="0 0 18 16"><path d="M1.8 2.6a1 1 0 0 1 1-1h4l1.8 2h6.6a1 1 0 0 1 1 1v9a1 1 0 0 1-1 1H2.8a1 1 0 0 1-1-1z" fill="none" stroke="#222" stroke-width="1.2" stroke-linejoin="round"/></svg>
 <svg class="abs" style="left:329px;top:65px" width="16" height="15" viewBox="0 0 16 15"><path d="M1 1.3h14M3 5.8h10M5 9.5h6M7 13.4h2" stroke="#222" stroke-width="1.2"/></svg>
 <div class="sep" style="top:95px"></div>
<div class="row" style="top:96px"><svg class="abs" style="left:4px;top:14px" width="8" height="5" viewBox="0 0 8 5"><path d="M0.5 0.8h6.5L3.75 4z" fill="#6a6a6a"/></svg><svg class="abs" style="left:14px;top:8px" width="16" height="16" viewBox="0 0 16 16"><circle cx="8" cy="8" r="6.3" fill="none" stroke="#8f8f8f" stroke-width="1"/><path d="M5.4 8.3l1.8 1.7 3.4-3.4" fill="none" stroke="#8f8f8f" stroke-width="1"/></svg><svg class="abs" style="left:34px;top:9px" width="16" height="14" viewBox="0 0 16 14"><path d="M1.5 2.5a1 1 0 0 1 1-1h3.3l1.7 1.8h6a1 1 0 0 1 1 1v7.7a1 1 0 0 1-1 1h-11a1 1 0 0 1-1-1z" fill="none" stroke="#333" stroke-width="1.2" stroke-linejoin="round"/></svg><div class="t" style="left:54px">Togal areas<span class="c">70</span></div></div>
<div class="row" style="top:128px"><svg class="abs" style="left:34px;top:8px" width="16" height="16" viewBox="0 0 16 16"><circle cx="8" cy="8" r="6.3" fill="none" stroke="#8f8f8f" stroke-width="1"/><path d="M5.4 8.3l1.8 1.7 3.4-3.4" fill="none" stroke="#8f8f8f" stroke-width="1"/></svg><svg class="abs" style="left:55px;top:10px" width="13" height="13" viewBox="0 0 13 13"><defs></defs><rect x="0.5" y="0.5" width="12" height="12" fill="#7fd48a" stroke="#58b868" stroke-width="1"/><path d="M0 4l4-4M0 9.5l9.5-9.5M3.5 13l9.5-9.5M9 13l4-4" transform="scale(-1,1) translate(-13,0)" stroke="#c9f5c9" stroke-width="1.7" opacity="0.85"/></svg><div class="t" style="left:74px">Net area<span class="c">22</span></div><div class="v">7,384 sq ft</div></div>
<div class="row" style="top:160px"><svg class="abs" style="left:34px;top:8px" width="16" height="16" viewBox="0 0 16 16"><circle cx="8" cy="8" r="6.3" fill="none" stroke="#8f8f8f" stroke-width="1"/><path d="M5.4 8.3l1.8 1.7 3.4-3.4" fill="none" stroke="#8f8f8f" stroke-width="1"/></svg><svg class="abs" style="left:55px;top:10px" width="13" height="13" viewBox="0 0 13 13"><defs></defs><rect x="0.5" y="0.5" width="12" height="12" fill="#3f8f6a" stroke="#2f6f52" stroke-width="1"/><path d="M0 4l4-4M0 9.5l9.5-9.5M3.5 13l9.5-9.5M9 13l4-4" transform="scale(-1,1) translate(-13,0)" stroke="#8fcfb0" stroke-width="1.7" opacity="0.85"/></svg><div class="t" style="left:74px">Gross area<span class="c">46</span></div><div class="v">1,558 sq ft</div></div>
<div class="row" style="top:192px"><svg class="abs" style="left:34px;top:8px" width="16" height="16" viewBox="0 0 16 16"><circle cx="8" cy="8" r="6.3" fill="none" stroke="#8f8f8f" stroke-width="1"/><path d="M5.4 8.3l1.8 1.7 3.4-3.4" fill="none" stroke="#8f8f8f" stroke-width="1"/></svg><svg class="abs" style="left:55px;top:10px" width="13" height="13" viewBox="0 0 13 13"><defs></defs><rect x="0.5" y="0.5" width="12" height="12" fill="#e070e8" stroke="#c050c8" stroke-width="1"/><path d="M0 4l4-4M0 9.5l9.5-9.5M3.5 13l9.5-9.5M9 13l4-4" transform="scale(-1,1) translate(-13,0)" stroke="#f6c0f8" stroke-width="1.7" opacity="0.85"/></svg><div class="t" style="left:74px">Footprint<span class="c">1</span></div><div class="v">337 sq ft</div></div>
<div class="row" style="top:224px"><svg class="abs" style="left:4px;top:14px" width="8" height="5" viewBox="0 0 8 5"><path d="M0.5 0.8h6.5L3.75 4z" fill="#6a6a6a"/></svg><svg class="abs" style="left:14px;top:8px" width="16" height="16" viewBox="0 0 16 16"><circle cx="8" cy="8" r="6.3" fill="none" stroke="#8f8f8f" stroke-width="1"/><path d="M5.4 8.3l1.8 1.7 3.4-3.4" fill="none" stroke="#8f8f8f" stroke-width="1"/></svg><svg class="abs" style="left:34px;top:9px" width="16" height="14" viewBox="0 0 16 14"><path d="M1.5 2.5a1 1 0 0 1 1-1h3.3l1.7 1.8h6a1 1 0 0 1 1 1v7.7a1 1 0 0 1-1 1h-11a1 1 0 0 1-1-1z" fill="none" stroke="#333" stroke-width="1.2" stroke-linejoin="round"/></svg><div class="t" style="left:54px">Togal walls<span class="c">419</span></div></div>
<div class="row" style="top:256px"><svg class="abs" style="left:34px;top:8px" width="16" height="16" viewBox="0 0 16 16"><circle cx="8" cy="8" r="6.3" fill="none" stroke="#8f8f8f" stroke-width="1"/><path d="M5.4 8.3l1.8 1.7 3.4-3.4" fill="none" stroke="#8f8f8f" stroke-width="1"/></svg><svg class="abs" style="left:54px;top:10px" width="16" height="12" viewBox="0 0 16 12"><path d="M2 6h12" stroke="#3f9a55" stroke-width="1.2"/><circle cx="2.5" cy="6" r="1.6" fill="#3f9a55"/><circle cx="13.5" cy="6" r="1.6" fill="#3f9a55"/></svg><div class="t" style="left:74px">Wall centerline<span class="c">48</span></div><div class="v">539 ft</div></div>
<div class="row" style="top:288px"><svg class="abs" style="left:34px;top:8px" width="16" height="16" viewBox="0 0 16 16"><circle cx="8" cy="8" r="6.3" fill="none" stroke="#8f8f8f" stroke-width="1"/><path d="M5.4 8.3l1.8 1.7 3.4-3.4" fill="none" stroke="#8f8f8f" stroke-width="1"/></svg><svg class="abs" style="left:54px;top:10px" width="16" height="12" viewBox="0 0 16 12"><path d="M2 6h12" stroke="#d9734e" stroke-width="1.2"/><circle cx="2.5" cy="6" r="1.6" fill="#d9734e"/><circle cx="13.5" cy="6" r="1.6" fill="#d9734e"/></svg><div class="t" style="left:74px">Wall perimeter<span class="c">143</span></div><div class="v">536 ft</div></div>
<div class="row" style="top:320px"><svg class="abs" style="left:34px;top:8px" width="16" height="16" viewBox="0 0 16 16"><circle cx="8" cy="8" r="6.3" fill="none" stroke="#8f8f8f" stroke-width="1"/><path d="M5.4 8.3l1.8 1.7 3.4-3.4" fill="none" stroke="#8f8f8f" stroke-width="1"/></svg><svg class="abs" style="left:55px;top:10px" width="13" height="13" viewBox="0 0 13 13"><defs></defs><rect x="0.5" y="0.5" width="12" height="12" fill="#7fd8d0" stroke="#5cc0b8" stroke-width="1"/><path d="M0 4l4-4M0 9.5l9.5-9.5M3.5 13l9.5-9.5M9 13l4-4" transform="scale(-1,1) translate(-13,0)" stroke="#c8f2ee" stroke-width="1.7" opacity="0.85"/></svg><div class="t" style="left:74px">Wall area<span class="c">46</span></div><div class="v">1,558 sq ft</div></div>
<div class="row" style="top:352px"><svg class="abs" style="left:4px;top:14px" width="8" height="5" viewBox="0 0 8 5"><path d="M0.5 0.8h6.5L3.75 4z" fill="#6a6a6a"/></svg><svg class="abs" style="left:14px;top:8px" width="16" height="16" viewBox="0 0 16 16"><circle cx="8" cy="8" r="6.3" fill="none" stroke="#8f8f8f" stroke-width="1"/><path d="M5.4 8.3l1.8 1.7 3.4-3.4" fill="none" stroke="#8f8f8f" stroke-width="1"/></svg><svg class="abs" style="left:34px;top:9px" width="16" height="14" viewBox="0 0 16 14"><path d="M1.5 2.5a1 1 0 0 1 1-1h3.3l1.7 1.8h6a1 1 0 0 1 1 1v7.7a1 1 0 0 1-1 1h-11a1 1 0 0 1-1-1z" fill="none" stroke="#333" stroke-width="1.2" stroke-linejoin="round"/></svg><div class="t" style="left:54px">Togal counts<span class="c">204</span></div></div>
<div class="row" style="top:384px"><svg class="abs" style="left:34px;top:8px" width="16" height="16" viewBox="0 0 16 16"><circle cx="8" cy="8" r="6.3" fill="none" stroke="#8f8f8f" stroke-width="1"/><path d="M5.4 8.3l1.8 1.7 3.4-3.4" fill="none" stroke="#8f8f8f" stroke-width="1"/></svg><svg class="abs" style="left:55px;top:10px" width="13" height="13" viewBox="0 0 13 13"><circle cx="6.5" cy="6.5" r="5.4" fill="#8f8f8f" stroke="#2e2e2e" stroke-width="1.2"/></svg><div class="t" style="left:74px">Single Swing Door</div><div class="v">143</div></div>
<div class="row" style="top:416px"><svg class="abs" style="left:34px;top:8px" width="16" height="16" viewBox="0 0 16 16"><circle cx="8" cy="8" r="6.3" fill="none" stroke="#8f8f8f" stroke-width="1"/><path d="M5.4 8.3l1.8 1.7 3.4-3.4" fill="none" stroke="#8f8f8f" stroke-width="1"/></svg><svg class="abs" style="left:55px;top:10px" width="13" height="13" viewBox="0 0 13 13"><circle cx="6.5" cy="6.5" r="5.4" fill="#8f8f8f" stroke="#2e2e2e" stroke-width="1.2"/></svg><div class="t" style="left:74px">Double Swing Door</div><div class="v">143</div></div>
<div class="row" style="top:448px"><svg class="abs" style="left:34px;top:8px" width="16" height="16" viewBox="0 0 16 16"><circle cx="8" cy="8" r="6.3" fill="none" stroke="#8f8f8f" stroke-width="1"/><path d="M5.4 8.3l1.8 1.7 3.4-3.4" fill="none" stroke="#8f8f8f" stroke-width="1"/></svg><svg class="abs" style="left:55px;top:10px" width="13" height="13" viewBox="0 0 13 13"><circle cx="6.5" cy="6.5" r="5.4" fill="#8f8f8f" stroke="#2e2e2e" stroke-width="1.2"/></svg><div class="t" style="left:74px">Sink</div><div class="v">143</div></div>
<div class="row" style="top:480px"><svg class="abs" style="left:34px;top:8px" width="16" height="16" viewBox="0 0 16 16"><circle cx="8" cy="8" r="6.3" fill="none" stroke="#8f8f8f" stroke-width="1"/><path d="M5.4 8.3l1.8 1.7 3.4-3.4" fill="none" stroke="#8f8f8f" stroke-width="1"/></svg><svg class="abs" style="left:55px;top:10px" width="13" height="13" viewBox="0 0 13 13"><circle cx="6.5" cy="6.5" r="5.4" fill="#8f8f8f" stroke="#2e2e2e" stroke-width="1.2"/></svg><div class="t" style="left:74px">Toilet</div><div class="v">143</div></div>
<div class="row" style="top:512px"><svg class="abs" style="left:34px;top:8px" width="16" height="16" viewBox="0 0 16 16"><circle cx="8" cy="8" r="6.3" fill="none" stroke="#8f8f8f" stroke-width="1"/><path d="M5.4 8.3l1.8 1.7 3.4-3.4" fill="none" stroke="#8f8f8f" stroke-width="1"/></svg><svg class="abs" style="left:55px;top:10px" width="13" height="13" viewBox="0 0 13 13"><circle cx="6.5" cy="6.5" r="5.4" fill="#8f8f8f" stroke="#2e2e2e" stroke-width="1.2"/></svg><div class="t" style="left:74px">Shower</div><div class="v">143</div></div>
</div>
<div id="scale" class="abs">Scale = '1/8" = 1' 0"'</div>
</body></html>
